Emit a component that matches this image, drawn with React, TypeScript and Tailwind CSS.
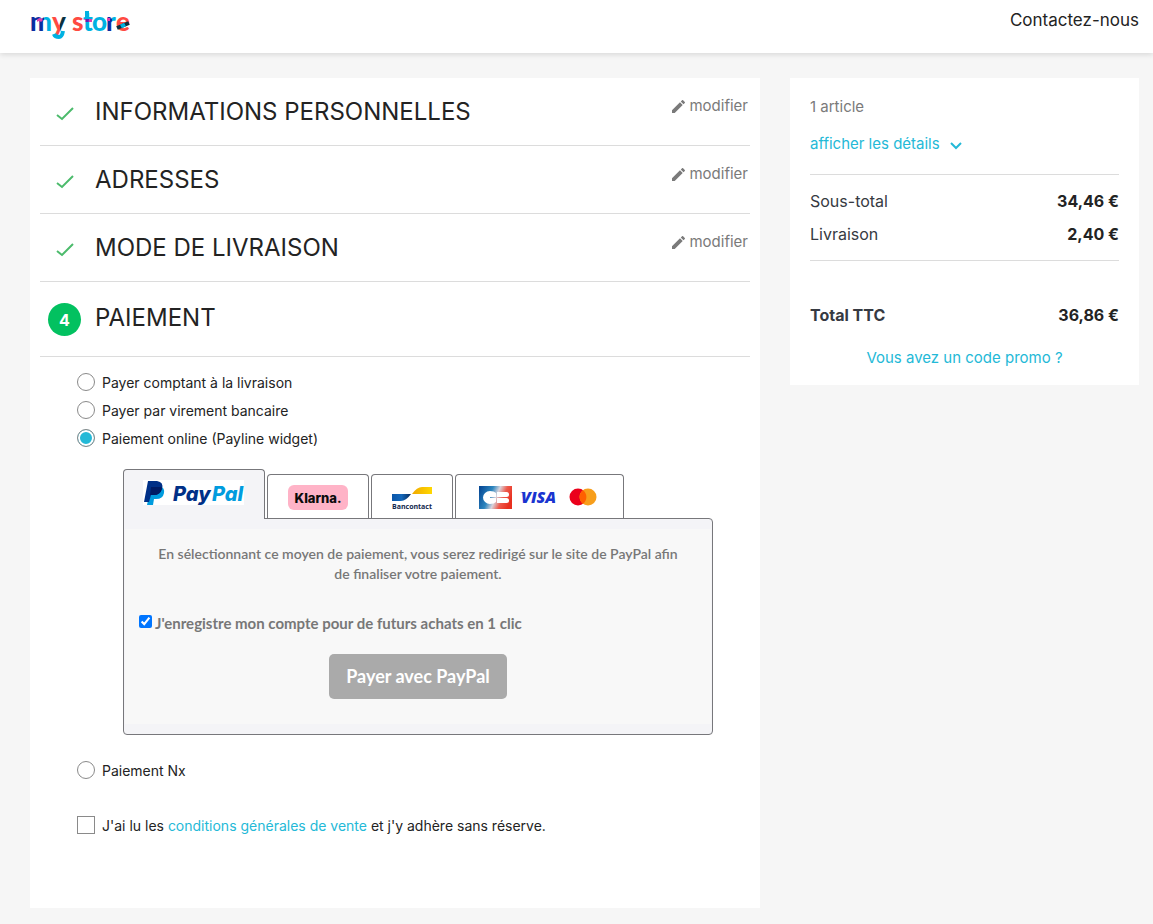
import { useState } from 'react';
import type { ReactNode } from 'react';

function StoreLogo() {
  return (
    <svg width="104" height="42" viewBox="0 -8 104 42" role="img" aria-label="my store">
      <defs>
        <linearGradient id="m" x1="0" x2="1" y1="0" y2="0">
          <stop offset="0.65" stopColor="#0a2ea0" />
          <stop offset="0.65" stopColor="#00b2e2" />
        </linearGradient>
        <linearGradient id="y" gradientUnits="userSpaceOnUse" x1="23" x2="36" y1="0" y2="0">
          <stop offset="0.55" stopColor="#ff4a42" />
          <stop offset="0.55" stopColor="#0b3040" />
        </linearGradient>
        <linearGradient id="t" gradientUnits="userSpaceOnUse" x1="0" x2="0" y1="0" y2="30">
          <stop offset="0.300" stopColor="#00b2e2" />
          <stop offset="0.300" stopColor="#6a1fae" />
          <stop offset="0.400" stopColor="#6a1fae" />
          <stop offset="0.400" stopColor="#00b2e2" />
        </linearGradient>
        <linearGradient id="r" x1="0" x2="1" y1="0" y2="0">
          <stop offset="0.55" stopColor="#0a2ea0" />
          <stop offset="0.55" stopColor="#00b2e2" />
        </linearGradient>
      </defs>
      <g fontFamily="Lato, sans-serif" fontWeight="900" fontSize="26">
        <text x="0" y="21" fill="url(#m)">m</text>
        <text x="22" y="21" fill="url(#y)">y</text>
        <text x="42" y="21" fill="#ff4a42">s</text>
        <text x="53" y="21" fill="url(#t)">t</text>
        <text x="62" y="21" fill="#00b2e2">o</text>
        <text x="76" y="21" fill="url(#r)">r</text>
        <text x="86" y="21" fill="#ff4a42">e</text>
      </g>
      <path d="M7 10Q10 6 13 10L11 12Q9 10 7 12Z" fill="#e13fae" />
      <path d="M24 24Q25 27 29 27Q32 27 33 21" fill="none" stroke="#00b2e2" strokeWidth="4" />
      <path d="M55 1H59V9H55Z" fill="#00b2e2" />
      <path d="M59 9H62V12H59Z" fill="#e13fae" />
      <path d="M77 8H80V11H77Z" fill="#e13fae" />
      <path d="M87 18 99 13" stroke="#0b3040" strokeWidth="4" />
      <path d="M91 16.500 95 14.500" stroke="#00b2e2" strokeWidth="4" />
    </svg>
  );
}

function PayPalLogo() {
  return (
    <svg width="102" height="26" viewBox="0 0 102 26" role="img" aria-label="PayPal">
      <rect width="101" height="25" fill="#fff" />
      <path d="M8 6H17Q22 8 21 13Q20 19 13 19H11L10 25H4Z" fill="#009cde" />
      <path d="M5 1H14Q21 2 19 9Q17 15 11 15H8L6 22H1Z" fill="#003087" />
      <path d="M8 7H17Q19 6 19 9Q17 15 11 15H7Z" fill="#001c64" />
      <g fontFamily="Inter, sans-serif" fontWeight="800" fontStyle="italic" fontSize="20">
        <text x="30" y="21" fill="#003087">Pay</text>
        <text x="69" y="21" fill="#009cde">Pal</text>
      </g>
    </svg>
  );
}

function KlarnaLogo() {
  return (
    <svg width="60" height="26" viewBox="0 0 60 26" role="img" aria-label="Klarna">
      <rect y="0" width="60" height="25" rx="6" fill="#ffb3c7" />
      <text x="30" y="18" textAnchor="middle" fontFamily="Inter, sans-serif" fontWeight="800" fontSize="13" fill="#0b0b0b">Klarna.</text>
    </svg>
  );
}

function BancontactLogo() {
  return (
    <svg width="42" height="28" viewBox="0 0 42 28" role="img" aria-label="Bancontact">
      <defs>
        <linearGradient id="bcBlue"><stop offset="0" stopColor="#0a55a8" /><stop offset="0.5" stopColor="#1468bb" /><stop offset="1" stopColor="#082b5c" /></linearGradient>
        <linearGradient id="bcGold"><stop offset="0" stopColor="#f0a800" /><stop offset="1" stopColor="#ffd800" /></linearGradient>
      </defs>
      <path d="M1 9H20Q15 16 10 16H1Z" fill="url(#bcBlue)" />
      <path d="M21 9Q26 2 31 2H41V9Z" fill="url(#bcGold)" />
      <text x="21" y="24" textAnchor="middle" fontFamily="Open Sans, sans-serif" fontWeight="700" fontSize="7" fill="#12284c">Bancontact</text>
    </svg>
  );
}

function CardLogos() {
  return (
    <svg width="122" height="26" viewBox="0 0 122 26" role="img" aria-label="CB, Visa, Mastercard">
      <defs>
        <linearGradient id="cb" x1="0" y1="0.2" x2="1" y2="0.5">
          <stop offset="0" stopColor="#084a96" />
          <stop offset="0.35" stopColor="#2c86bf" />
          <stop offset="0.55" stopColor="#d9d4dc" />
          <stop offset="0.75" stopColor="#ee5a4c" />
          <stop offset="1" stopColor="#e8301f" />
        </linearGradient>
      </defs>
      <g transform="translate(0 1)">
        <rect width="33" height="23" fill="url(#cb)" />
        <path d="M17 11V7Q15 5 11 5A7 6.500 0 0 0 11 18Q15 18 17 16V12H11V11Z" fill="#fff" />
        <path d="M18 6H27.500A2.500 2.500 0 0 1 27.500 11H18Z" fill="#fff" />
        <path d="M18 12H27.500A2.500 2.500 0 0 1 27.500 17H18Z" fill="#fff" />
        <path d="M41 6H46L45 8Q43 6 41 6Z" fill="#1a34d0" />
        <text x="42" y="17" fontFamily="Open Sans, sans-serif" fontWeight="800" fontStyle="italic" fontSize="16" fill="#1a34d0">VISA</text>
        <circle cx="99" cy="11" r="8.500" fill="#eb001b" />
        <circle cx="109" cy="11" r="8.500" fill="#f79e1b" />
        <path d="M104 4.200a8.500 8.500 0 0 1 0 13.600a8.500 8.500 0 0 1 0-13.600" fill="#ff5f00" />
      </g>
    </svg>
  );
}

function CheckIcon() {
  return (
    <svg width="18" height="14" viewBox="0 0 18 14" fill="none" aria-hidden="true">
      <path d="M1 8 6 12 17 1" stroke="#4cbb6c" strokeWidth="2" />
    </svg>
  );
}

function PencilIcon() {
  return (
    <svg width="13" height="13" viewBox="3 3 18 18" fill="#7a7a7a" aria-hidden="true">
      <path d="M3 17.250V21h3.750L17.810 9.940l-3.750-3.750L3 17.250zM20.710 7.040a1 1 0 0 0 0-1.410l-2.340-2.340a1 1 0 0 0-1.410 0l-1.830 1.830 3.750 3.750 1.830-1.830z" />
    </svg>
  );
}

function DoneStep({ title }: { title: string }) {
  return (
    <section className="flex h-[68px] items-start border-b border-[#dcdcdc] pr-[2px]">
      <span className="flex w-[50px] justify-center pt-[29px]"><CheckIcon /></span>
      <h2 className="flex-1 pt-[18px] pl-[5px] text-[24px] leading-8 text-[#232323] uppercase">{title}</h2>
      <button type="button" className="flex items-center gap-1 pt-4 text-[15px] leading-6 text-[#7a7a7a]">
        <PencilIcon />
        modifier
      </button>
    </section>
  );
}

const tabs: { id: string; logo: ReactNode; size: string }[] = [
  { id: 'paypal', logo: <PayPalLogo />, size: 'w-[142px]' },
  { id: 'klarna', logo: <KlarnaLogo />, size: 'w-[102px]' },
  { id: 'bancontact', logo: <BancontactLogo />, size: 'w-[82px]' },
  { id: 'cards', logo: <CardLogos />, size: 'w-[169px]' },
];

function Widget() {
  const [active, setActive] = useState('paypal');
  return (
    <div className="mt-[17px] mr-[37px] ml-[83px]">
      <div role="tablist" className="flex items-end gap-[2px]">
        {tabs.map((t) => (
          <button
            key={t.id}
            type="button"
            role="tab"
            aria-selected={active === t.id}
            onClick={() => setActive(t.id)}
            className={`flex justify-center rounded-t-[4px] border border-b-0 border-[#77777b] pt-[10px] ${t.size} ${
              active === t.id ? 'relative z-10 -mb-px h-[50px] bg-[#f4f4f7]' : 'h-[44px] bg-white'
            }`}
          >
            {t.logo}
          </button>
        ))}
      </div>
      <div role="tabpanel" className="rounded-[4px] rounded-tl-none border border-[#77777b] bg-[#f4f4f7] px-px py-[10px] font-[Lato,sans-serif] text-[#777]">
        <div className="bg-[#f8f8f8] px-[14px] pt-[15px] pb-[25px]">
          <p className="text-center text-[14px] leading-5 font-semibold">
            En sélectionnant ce moyen de paiement, vous serez redirigé sur le site de PayPal afin
            <br />
            de finaliser votre paiement.
          </p>
          <label className="mt-[29px] flex items-start gap-[3px] text-[15px] leading-5 font-bold">
            <input type="checkbox" defaultChecked className="mt-[2px] size-[13px] accent-[#0075ff]" />
            J'enregistre mon compte pour de futurs achats en 1 clic
          </label>
          <div className="mt-[21px] flex justify-center">
            <button type="button" className="h-[45px] rounded-[5px] bg-[#aaa] px-[17px] text-[18px] font-bold text-white">
              Payer avec PayPal
            </button>
          </div>
        </div>
      </div>
    </div>
  );
}

function PaymentOption({ label, checked }: { label: string; checked?: boolean }) {
  return (
    <label className="flex h-7 items-center gap-[7px] pl-[37px] text-[14px] text-[#232323]">
      <input
        type="radio"
        name="payment"
        defaultChecked={checked}
        className="size-[18px] appearance-none rounded-full border border-[#8a8a8a] bg-white checked:bg-[#24b9d7] checked:shadow-[inset_0_0_0_2px_#fff]"
      />
      {label}
    </label>
  );
}

function SummaryRow({ label, value, strong }: { label: string; value: string; strong?: boolean }) {
  return (
    <div className={`flex h-[33px] items-center justify-between text-[16px] text-[#363a42] ${strong ? 'font-bold' : ''}`}>
      <span>{label}</span>
      <span className="font-bold text-[#232323]">{value}</span>
    </div>
  );
}

export default function App() {
  return (
    <div className="min-h-screen bg-[#f6f6f6] pb-4 font-[Inter,sans-serif]">
      <header className="relative flex h-[53px] items-start justify-between bg-white pr-[14px] pl-[30px] shadow-[0_2px_5px_0_rgba(0,0,0,0.11)]">
        <a href="#" className="pt-[2px]"><StoreLogo /></a>
        <a href="#" className="pt-2 text-[17px] leading-6 text-[#232323]">Contactez-nous</a>
      </header>
      <main className="mt-[25px] grid grid-cols-[730fr_349fr] items-start gap-[30px] pr-[14px] pl-[30px]">
        <div className="bg-white px-[10px] pb-[69px]">
          <DoneStep title="Informations personnelles" />
          <DoneStep title="Adresses" />
          <DoneStep title="Mode de livraison" />
          <section>
            <div className="flex h-[75px] items-start border-b border-[#dcdcdc]">
              <span className="mt-[21px] ml-2 flex size-[33px] items-center justify-center rounded-full bg-[#02c160] text-[16px] font-bold text-white">4</span>
              <h2 className="pt-5 pl-[14px] text-[24px] leading-8 text-[#232323]">PAIEMENT</h2>
            </div>
            <div className="mt-[11px]">
              <PaymentOption label="Payer comptant à la livraison" />
              <PaymentOption label="Payer par virement bancaire" />
              <PaymentOption label="Paiement online (Payline widget)" checked />
            </div>
            <Widget />
            <div className="mt-[21px]">
              <PaymentOption label="Paiement Nx" />
            </div>
            <div className="mt-[27px] flex h-7 items-center gap-[7px] pl-[37px] text-[14px] text-[#232323]">
              <input id="terms" type="checkbox" className="size-[18px] appearance-none border border-[#8a8a8a] bg-white checked:bg-[#24b9d7]" />
              <label htmlFor="terms">
                J'ai lu les <a href="#" className="text-[#24b9d7]">conditions générales de vente</a> et j'y adhère sans réserve.
              </label>
            </div>
          </section>
        </div>
        <aside className="bg-white px-5 pt-[17px] pb-[15px] text-[15px]">
          <p className="leading-6 text-[#7a7a7a]">1 article</p>
          <button type="button" className="mt-[13px] flex items-center gap-[10px] leading-6 text-[#24b9d7]">
            afficher les détails
            <svg width="12" height="8" viewBox="0 0 12 8" fill="none" aria-hidden="true" className="mt-1">
              <path d="M1 1 6 6 11 1" stroke="#24b9d7" strokeWidth="2" />
            </svg>
          </button>
          <div className="mt-[18px] border-y border-[#dcdcdc] pt-[9px] pb-[10px]">
            <SummaryRow label="Sous-total" value="34,46 €" />
            <SummaryRow label="Livraison" value="2,40 €" />
          </div>
          <div className="mt-[37px]">
            <SummaryRow label="Total TTC" value="36,86 €" strong />
          </div>
          <p className="mt-[15px] text-center leading-6">
            <a href="#" className="text-[#24b9d7]">Vous avez un code promo ?</a>
          </p>
        </aside>
      </main>
    </div>
  );
}
